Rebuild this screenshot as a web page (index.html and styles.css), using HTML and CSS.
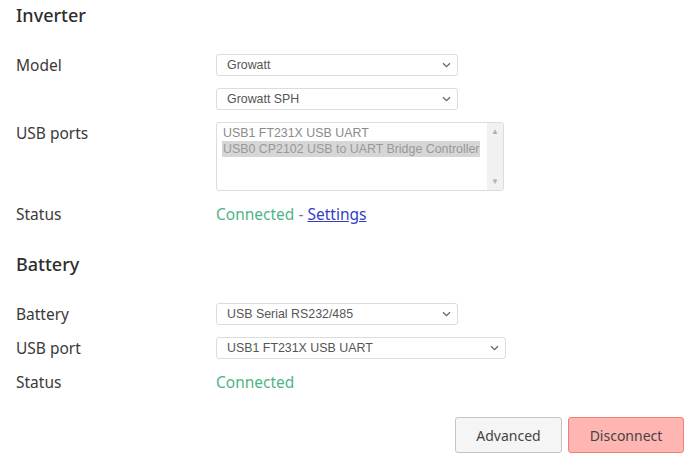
FILE: index.html
```html
<!DOCTYPE html>
<html lang="en">
<head>
    <meta charset="UTF-8">
    <title>Inverter</title>
    <link rel="stylesheet" href="styles.css">
</head>
<body>
    <h2 class="section-title">Inverter</h2>
    <div class="form-block">
        <div class="row">
            <label class="row-label" for="model">Model</label>
            <div class="select-wrap">
                <select id="model" class="field">
                    <option>Growatt</option>
                </select>
                <svg class="chevron" width="9" height="6" viewBox="0 0 9 6"><path d="M1 1.2 L4.5 4.6 L8 1.2" fill="none" stroke="#666" stroke-width="1.3"/></svg>
            </div>
        </div>
        <div class="row">
            <span class="row-label"></span>
            <div class="select-wrap">
                <select id="submodel" class="field">
                    <option>Growatt SPH</option>
                </select>
                <svg class="chevron" width="9" height="6" viewBox="0 0 9 6"><path d="M1 1.2 L4.5 4.6 L8 1.2" fill="none" stroke="#666" stroke-width="1.3"/></svg>
            </div>
        </div>
        <div class="row">
            <span class="row-label">USB ports</span>
            <div class="listbox">
                <div class="listbox-options">
                    <div class="listbox-option">USB1 FT231X USB UART</div>
                    <div class="listbox-option selected">USB0 CP2102 USB to UART Bridge Controller</div>
                </div>
                <div class="scrollbar">
                    <span class="scroll-arrow">&#9650;</span>
                    <span class="scroll-arrow">&#9660;</span>
                </div>
            </div>
        </div>
        <div class="row row-status">
            <span class="row-label">Status</span>
            <span><span class="connected">Connected</span> <span class="dash">-</span> <a href="#" class="settings-link">Settings</a></span>
        </div>
    </div>

    <h2 class="section-title">Battery</h2>
    <div class="form-block">
        <div class="row">
            <label class="row-label" for="battery">Battery</label>
            <div class="select-wrap">
                <select id="battery" class="field">
                    <option>USB Serial RS232/485</option>
                </select>
                <svg class="chevron" width="9" height="6" viewBox="0 0 9 6"><path d="M1 1.2 L4.5 4.6 L8 1.2" fill="none" stroke="#666" stroke-width="1.3"/></svg>
            </div>
        </div>
        <div class="row">
            <label class="row-label" for="usbPort">USB port</label>
            <div class="select-wrap">
                <select id="usbPort" class="field field-wide">
                    <option>USB1 FT231X USB UART</option>
                </select>
                <svg class="chevron" width="9" height="6" viewBox="0 0 9 6"><path d="M1 1.2 L4.5 4.6 L8 1.2" fill="none" stroke="#666" stroke-width="1.3"/></svg>
            </div>
        </div>
        <div class="row row-status">
            <span class="row-label">Status</span>
            <span class="connected">Connected</span>
        </div>
    </div>

    <div class="buttons-container">
        <button class="btn btn-default">Advanced</button>
        <button class="btn btn-danger">Disconnect</button>
    </div>
</body>
</html>
```

FILE: styles.css
```css
body {
    background-color: white;
    color: #3a3a3a;
    font-family: "Noto Sans", Arial, sans-serif;
    margin: 0;
    padding: 0 6px 0 16px;
}
.section-title {
    font-size: 18px;
    font-weight: 500;
    line-height: 30px;
    margin: 0;
    color: #2d2d2d;
}
.form-block {
    margin-top: 24px;
    margin-bottom: 24px;
}
.row {
    display: flex;
    align-items: flex-start;
    margin-bottom: 12px;
}
.row:last-child {
    margin-bottom: 0;
}
.row-label {
    width: 200px;
    flex-shrink: 0;
    font-size: 15.5px;
    line-height: 22px;
}
.select-wrap {
    position: relative;
}
.chevron {
    position: absolute;
    right: 7px;
    top: 8px;
    pointer-events: none;
}
.field {
    appearance: none;
    -webkit-appearance: none;
    font-family: "Liberation Sans", Arial, sans-serif;
    font-size: 12.4px;
    color: #555;
    background-color: white;
    border: 1px solid #dcdcdc;
    border-radius: 3px;
    width: 242px;
    height: 22px;
    padding: 0 10px;
    box-sizing: border-box;
    display: block;
}
.field-wide {
    width: 290px;
}
.listbox {
    display: flex;
    width: 288px;
    height: 69px;
    box-sizing: border-box;
    border: 1px solid #dcdcdc;
    border-radius: 3px;
    overflow: hidden;
    font-family: "Liberation Sans", Arial, sans-serif;
    font-size: 12.4px;
    color: #8a8a8a;
}
.listbox-options {
    flex: 1;
    padding: 2px 0 0 5px;
}
.listbox-option {
    width: fit-content;
    line-height: 16px;
    padding: 0 1px;
}
.listbox-option.selected {
    background-color: #d6d6d6;
    color: #999;
}
.scrollbar {
    width: 16px;
    background-color: #f1f1f1;
    display: flex;
    flex-direction: column;
    justify-content: space-between;
    align-items: center;
    padding: 4px 0 3px;
}
.scroll-arrow {
    font-size: 8px;
    line-height: 10px;
    color: #b0b0b0;
}
.row-status {
    margin-top: 14px;
}
.form-block .row + .row-status {
    margin-top: 11px;
}
.row-status > span {
    line-height: 22px;
    font-size: 15.5px;
}
.connected {
    color: #4fb586;
}
.dash {
    color: #777;
}
.settings-link {
    color: #3340c4;
}
.buttons-container {
    display: flex;
    justify-content: flex-end;
    gap: 6px;
    margin-top: 23px;
}
.btn {
    font-family: "Noto Sans", Arial, sans-serif;
    font-size: 14px;
    color: #444;
    height: 36px;
    padding: 0 10px;
    border-radius: 3px;
    cursor: pointer;
}
.btn-default {
    background-color: #f5f5f5;
    border: 1px solid #c4c4c4;
    width: 107px;
}
.btn-danger {
    background-color: #ffb5b1;
    border: 1px solid #ef7f7a;
    width: 116px;
}
```
